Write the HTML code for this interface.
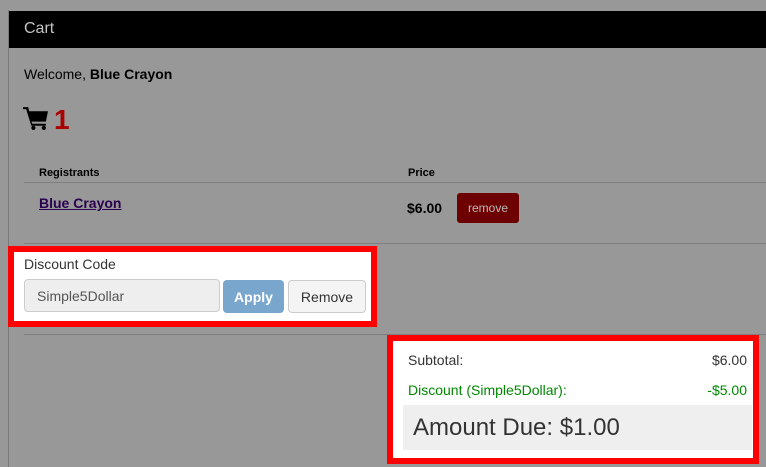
<!DOCTYPE html>
<html><head><style>
body{margin:0;width:766px;height:467px;background:#989898;font-family:"Liberation Sans",sans-serif;position:relative;overflow:hidden}
.a{position:absolute}
</style></head><body>
<div class="a" style="left:8px;top:10px;width:1px;height:457px;background:#7a7a7a"></div>
<div class="a" style="left:9px;top:11px;width:757px;height:37px;background:#000"></div>
<div class="a" style="left:24px;top:20px;font-size:16px;color:#c4c4c4">Cart</div>
<div class="a" style="left:24px;top:66px;font-size:14px;color:#000">Welcome, <b>Blue Crayon</b></div>
<svg class="a" style="left:23px;top:105px" width="26" height="26" viewBox="0 0 25 25"><path d="M0 2h5l1 4h18l-2 10H8l1 2h13v2H8L3 4H0z" fill="#000"/><circle cx="10" cy="22" r="2" fill="#000"/><circle cx="20" cy="22" r="2" fill="#000"/></svg>
<div class="a" style="left:54px;top:104px;font-size:28px;font-weight:bold;color:#a00">1</div>
<div class="a" style="left:39px;top:167px;font-size:11px;font-weight:bold;color:#000">Registrants</div>
<div class="a" style="left:408px;top:167px;font-size:11px;font-weight:bold;color:#000">Price</div>
<div class="a" style="left:24px;top:182px;width:742px;height:1px;background:#7e7e7e"></div>
<div class="a" style="left:39px;top:195px;font-size:14px;font-weight:bold;color:#2a0050;text-decoration:underline">Blue Crayon</div>
<div class="a" style="left:407px;top:200px;font-size:14px;font-weight:bold;color:#000">$6.00</div>
<div class="a" style="left:457px;top:193px;width:62px;height:30px;background:#6d0000;border-radius:3px;color:#bbb;font-size:12px;text-align:center;line-height:30px">remove</div>
<div class="a" style="left:24px;top:243px;width:742px;height:1px;background:#7e7e7e"></div>
<div class="a" style="left:24px;top:334px;width:742px;height:1px;background:#7e7e7e"></div>
<div class="a" style="left:8px;top:246px;width:357px;height:69px;border:6px solid #f00;background:#fff"></div>
<div class="a" style="left:24px;top:256px;font-size:14px;color:#333">Discount Code</div>
<div class="a" style="left:24px;top:279px;width:196px;height:33px;background:#eee;border:1px solid #ccc;border-radius:4px;box-sizing:border-box"></div>
<div class="a" style="left:37px;top:288px;font-size:14px;color:#555">Simple5Dollar</div>
<div class="a" style="left:223px;top:280px;width:61px;height:33px;background:#78a6cd;border-radius:4px;color:#fff;font-size:14px;font-weight:bold;text-align:center;line-height:34px">Apply</div>
<div class="a" style="left:288px;top:280px;width:78px;height:33px;background:#f4f4f4;border:1px solid #ccc;border-radius:4px;box-sizing:border-box;color:#333;font-size:14px;text-align:center;line-height:32px">Remove</div>
<div class="a" style="left:387px;top:335px;width:360px;height:117px;border:6px solid #f00;background:#fff"></div>
<div class="a" style="left:408px;top:352px;font-size:14px;color:#333">Subtotal:</div>
<div class="a" style="left:660px;top:352px;width:87px;text-align:right;font-size:14px;color:#333">$6.00</div>
<div class="a" style="left:408px;top:382px;font-size:14px;color:#080">Discount (Simple5Dollar):</div>
<div class="a" style="left:660px;top:382px;width:87px;text-align:right;font-size:14px;color:#080">-$5.00</div>
<div class="a" style="left:403px;top:405px;width:349px;height:45px;background:#efefef"></div>
<div class="a" style="left:413px;top:414px;font-size:24px;color:#333">Amount Due: $1.00</div>
</body></html>
